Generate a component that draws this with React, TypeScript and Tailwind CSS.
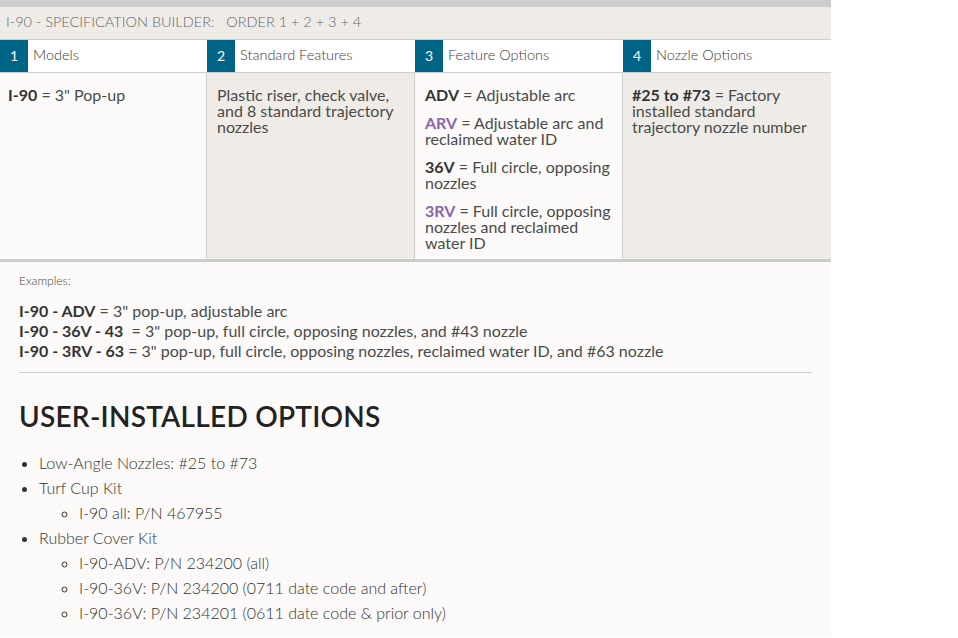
import React from "react";

const font = { fontFamily: "Lato, 'Noto Sans', sans-serif" };

function Head({ n, label }: { n: string; label: string }) {
  return (
    <div className="flex h-[32px] bg-white">
      <div className="flex w-[28px] items-center justify-center bg-[#006487] pb-[1px] text-[14px] text-white">{n}</div>
      <div className="flex items-center pb-[3px] pl-[5px] text-[14.5px] font-light text-[#3a3a3a]">{label}</div>
    </div>
  );
}

export default function App() {
  return (
    <div style={font} className="w-[831px] bg-[#fbfaf8] text-[#4a4a4a]">
      <div className="h-[7px] bg-[#cccccc]" />
      <div className="flex h-[33px] items-center border-b border-[#cccccc] bg-[#efece8] pb-[3px] pl-[6px] text-[14.5px] font-light text-[#666]">
        I-90 - SPECIFICATION BUILDER:&nbsp;&nbsp;&nbsp;ORDER 1 + 2 + 3 + 4
      </div>
      <div className="grid grid-cols-[207px_208px_208px_208px] border-b border-[#cccccc]">
        <Head n="1" label="Models" />
        <Head n="2" label="Standard Features" />
        <Head n="3" label="Feature Options" />
        <Head n="4" label="Nozzle Options" />
      </div>
      <div className="grid h-[189px] grid-cols-[207px_208px_208px_208px] border-b-[3px] border-[#cccccc] text-[16px] leading-[16px]">
        <div className="border-r border-[#cccccc] bg-[#fbfaf8] px-[8px] pt-[14px]">
          <b className="font-bold text-[#333]">I-90</b> = 3" Pop-up
        </div>
        <div className="border-r border-[#cccccc] bg-[#efece8] pl-[10px] pr-[8px] pt-[14px]">
          Plastic riser, check valve, and 8 standard trajectory nozzles
        </div>
        <div className="flex flex-col gap-[12px] border-r border-[#cccccc] bg-[#fbfaf8] pl-[10px] pr-[8px] pt-[14px]">
          <p>
            <b className="font-bold text-[#333]">ADV</b> = Adjustable arc
          </p>
          <p>
            <b className="font-bold text-[#8b64ab]">ARV</b> = Adjustable arc and reclaimed water ID
          </p>
          <p>
            <b className="font-bold text-[#333]">36V</b> = Full circle, opposing nozzles
          </p>
          <p>
            <b className="font-bold text-[#8b64ab]">3RV</b> = Full circle, opposing nozzles and reclaimed water ID
          </p>
        </div>
        <div className="bg-[#efece8] pl-[9px] pr-[8px] pt-[14px]">
          <b className="font-bold text-[#333]">#25 to #73</b> = Factory installed standard trajectory nozzle number
        </div>
      </div>
      <div className="px-[19px] pb-[12px]">
        <div className="pt-[11px] text-[12px] font-light leading-[16px] text-[#444]">Examples:</div>
        <div className="mt-[12px] text-[16px] leading-[20px]">
          <div>
            <b className="font-bold text-[#333]">I-90 - ADV</b> = 3" pop-up, adjustable arc
          </div>
          <div>
            <b className="font-bold text-[#333]">I-90 - 36V - 43</b>&nbsp; = 3" pop-up, full circle, opposing nozzles, and #43 nozzle
          </div>
          <div>
            <b className="font-bold text-[#333]">I-90 - 3RV - 63</b> = 3" pop-up, full circle, opposing nozzles, reclaimed water ID, and #63 nozzle
          </div>
        </div>
        <div className="mt-[11px] border-t border-[#cccccc]" />
        <h2 className="mt-[26px] text-[28px] font-semibold leading-[34px] tracking-[0.25px] text-[#222]">USER-INSTALLED OPTIONS</h2>
        <ul className="mt-[17px] list-disc pl-[20px] text-[16px] font-light leading-[25px] text-[#333]">
          <li>Low-Angle Nozzles: #25 to #73</li>
          <li>
            Turf Cup Kit
            <ul className="list-[circle] pl-[40px]">
              <li>I-90 all: P/N 467955</li>
            </ul>
          </li>
          <li>
            Rubber Cover Kit
            <ul className="list-[circle] pl-[40px]">
              <li>I-90-ADV: P/N 234200 (all)</li>
              <li>I-90-36V: P/N 234200 (0711 date code and after)</li>
              <li>I-90-36V: P/N 234201 (0611 date code &amp; prior only)</li>
            </ul>
          </li>
        </ul>
      </div>
    </div>
  );
}
